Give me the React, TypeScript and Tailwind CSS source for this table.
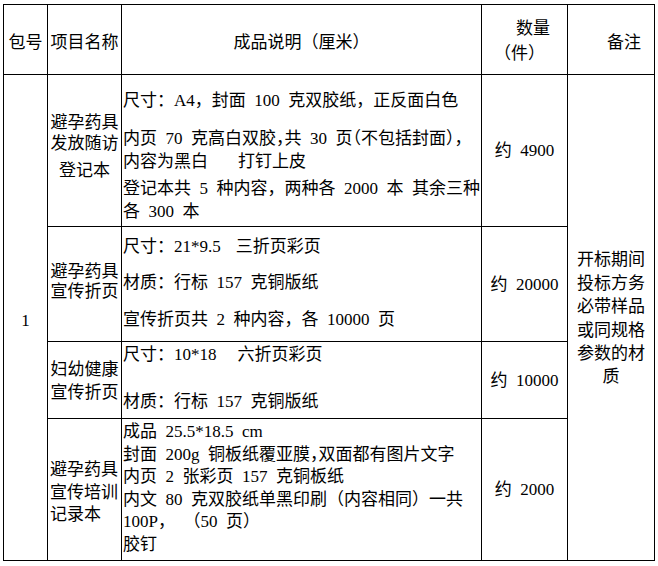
const sp = (t: string) => t.replace(/ /g, '\u2002');

const cell = 'border border-black p-0';

export default function App() {
  return (
    <div className="bg-white min-h-screen pt-[4px] pl-[3px] text-black text-[17px] leading-[23px] [font-family:'Liberation_Serif','Noto_Sans_CJK_SC',serif]">
      <table className="table-fixed border-collapse w-[651px]">
        <colgroup>
          <col className="w-[44px]" />
          <col className="w-[74px]" />
          <col className="w-[360px]" />
          <col className="w-[86px]" />
          <col className="w-[87px]" />
        </colgroup>
        <tbody>
          {/* header */}
          <tr className="h-[70px]">
            <td className={`${cell} text-center align-middle pt-[5px]`}>包号</td>
            <td className={`${cell} text-center align-middle pt-[5px]`}>项目名称</td>
            <td className={`${cell} text-center align-middle pt-[5px]`}>成品说明（厘米）</td>
            <td className={`${cell} align-middle pt-[3px]`}>
              <div className="leading-[25px] pl-[34px]">数量</div>
              <div className="leading-[25px] pl-[12px]">（件）</div>
            </td>
            <td className={`${cell} align-middle pt-[5px] pl-[39px]`}>备注</td>
          </tr>

          {/* row 1 */}
          <tr className="h-[152px]">
            <td rowSpan={4} className={`${cell} text-center align-middle pt-[6px]`}>1</td>
            <td className={`${cell} text-center align-top pt-[37px] leading-[21px]`}>
              <div>避孕药具</div>
              <div>发放随访</div>
              <div className="mt-[6px]">登记本</div>
            </td>
            <td className={`${cell} align-top pt-[14px] pl-[1px] whitespace-nowrap`}>
              <div>{sp('尺寸：A4，封面 100 克双胶纸，正反面白色')}</div>
              <div className="mt-[15px] [font-feature-settings:'halt']">{sp('内页 70 克高白双胶，共 30 页（不包括封面），')}</div>
              <div>
                内容为黑白<span className="ml-[30px]">打钉上皮</span>
              </div>
              <div className="mt-[4px]">{sp('登记本共 5 种内容，两种各 2000 本 其余三种')}</div>
              <div>{sp('各 300 本')}</div>
            </td>
            <td className={`${cell} text-center align-middle`}>{sp('约 4900')}</td>
            <td rowSpan={4} className={`${cell} text-center align-middle leading-[23.4px] pt-[2px]`}>
              <div>开标期间</div>
              <div>投标方务</div>
              <div>必带样品</div>
              <div>或同规格</div>
              <div>参数的材</div>
              <div>质</div>
            </td>
          </tr>

          {/* row 2 */}
          <tr className="h-[115px]">
            <td className={`${cell} text-center align-top pt-[35px] leading-[20px]`}>
              <div>避孕药具</div>
              <div>宣传折页</div>
            </td>
            <td className={`${cell} align-top pt-[8px] pl-[1px] whitespace-nowrap`}>
              <div>
                尺寸：21*9.5<span className="ml-[15px]">三折页彩页</span>
              </div>
              <div className="mt-[13px]">{sp('材质：行标 157 克铜版纸')}</div>
              <div className="mt-[14px]">{sp('宣传折页共 2 种内容，各 10000 页')}</div>
            </td>
            <td className={`${cell} text-center align-middle`}>{sp('约 20000')}</td>
          </tr>

          {/* row 3 */}
          <tr className="h-[77px]">
            <td className={`${cell} text-center align-top pt-[16px]`}>
              <div>妇幼健康</div>
              <div>宣传折页</div>
            </td>
            <td className={`${cell} align-top pt-[1px] pl-[1px] whitespace-nowrap`}>
              <div>
                尺寸：10*18<span className="ml-[21px]">六折页彩页</span>
              </div>
              <div className="mt-[24px]">{sp('材质：行标 157 克铜版纸')}</div>
            </td>
            <td className={`${cell} text-center align-middle`}>{sp('约 10000')}</td>
          </tr>

          {/* row 4 */}
          <tr className="h-[142px]">
            <td className={`${cell} align-top pt-[40px] pl-[2px] leading-[22.5px]`}>
              <div>避孕药具</div>
              <div>宣传培训</div>
              <div>记录本</div>
            </td>
            <td className={`${cell} align-top pt-[2px] pl-[1px] whitespace-nowrap leading-[22.6px]`}>
              <div>{sp('成品 25.5*18.5 cm')}</div>
              <div className="[font-feature-settings:'halt']">{sp('封面 200g 铜板纸覆亚膜，双面都有图片文字')}</div>
              <div>{sp('内页 2 张彩页 157 克铜板纸')}</div>
              <div>{sp('内文 80 克双胶纸单黑印刷（内容相同）一共')}</div>
              <div>{sp('100P， （50 页）')}</div>
              <div>胶钉</div>
            </td>
            <td className={`${cell} text-center align-middle`}>{sp('约 2000')}</td>
          </tr>
        </tbody>
      </table>
    </div>
  );
}
